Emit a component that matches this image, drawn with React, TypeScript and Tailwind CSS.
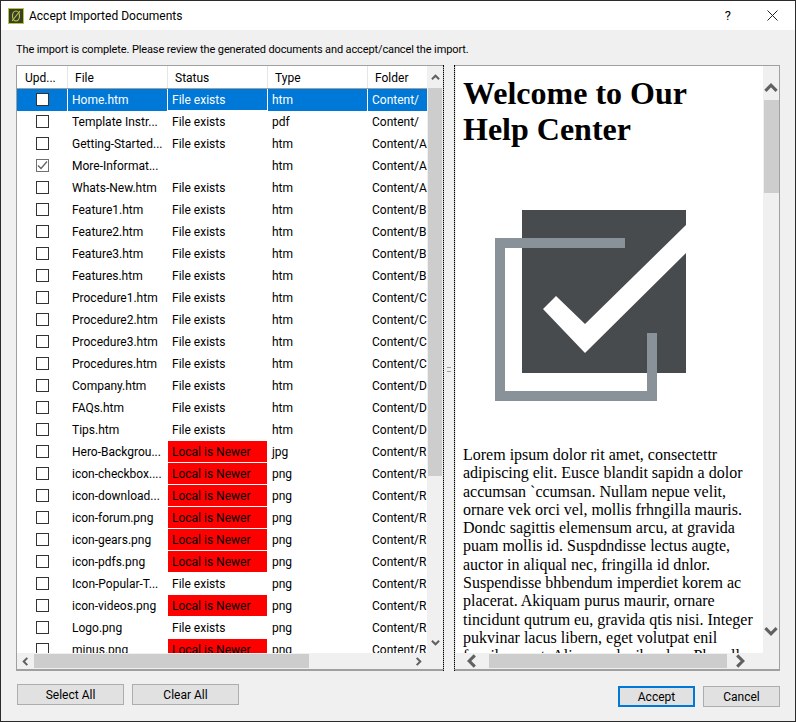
const ui = { fontFamily: 'Roboto, sans-serif' };

type Row = { file: string; status: string; type: string; folder: string; checked?: boolean };

const mk = (file: string, status: string, type: string, folder: string, checked = false): Row => ({ file, status, type, folder, checked });
const FE = 'File exists';
const LN = 'Local is Newer';

const rows: Row[] = [
  mk('Home.htm', FE, 'htm', 'Content/'),
  mk('Template Instr...', FE, 'pdf', 'Content/'),
  mk('Getting-Started...', FE, 'htm', 'Content/A'),
  mk('More-Informat...', '', 'htm', 'Content/A', true),
  mk('Whats-New.htm', FE, 'htm', 'Content/A'),
  mk('Feature1.htm', FE, 'htm', 'Content/B'),
  mk('Feature2.htm', FE, 'htm', 'Content/B'),
  mk('Feature3.htm', FE, 'htm', 'Content/B'),
  mk('Features.htm', FE, 'htm', 'Content/B'),
  mk('Procedure1.htm', FE, 'htm', 'Content/C'),
  mk('Procedure2.htm', FE, 'htm', 'Content/C'),
  mk('Procedure3.htm', FE, 'htm', 'Content/C'),
  mk('Procedures.htm', FE, 'htm', 'Content/C'),
  mk('Company.htm', FE, 'htm', 'Content/D'),
  mk('FAQs.htm', FE, 'htm', 'Content/D'),
  mk('Tips.htm', FE, 'htm', 'Content/D'),
  mk('Hero-Backgrou...', LN, 'jpg', 'Content/R'),
  mk('icon-checkbox....', LN, 'png', 'Content/R'),
  mk('icon-download...', LN, 'png', 'Content/R'),
  mk('icon-forum.png', LN, 'png', 'Content/R'),
  mk('icon-gears.png', LN, 'png', 'Content/R'),
  mk('icon-pdfs.png', LN, 'png', 'Content/R'),
  mk('Icon-Popular-T...', FE, 'png', 'Content/R'),
  mk('icon-videos.png', LN, 'png', 'Content/R'),
  mk('Logo.png', FE, 'png', 'Content/R'),
  mk('minus.png', LN, 'png', 'Content/R'),
];

function Chevron({ dir, size = 9, color = '#606060' }: { dir: 'up' | 'down' | 'left' | 'right'; size?: number; color?: string }) {
  const d = {
    up: 'M1 7 L5 3 L9 7',
    down: 'M1 3 L5 7 L9 3',
    left: 'M7 1 L3 5 L7 9',
    right: 'M3 1 L7 5 L3 9',
  }[dir];
  return (
    <svg width={size} height={size} viewBox="0 0 10 10" className="shrink-0">
      <path d={d} fill="none" stroke={color} strokeWidth="2.2" />
    </svg>
  );
}

function Check({ checked }: { checked?: boolean }) {
  return (
    <div className={`w-[13px] h-[13px] border bg-white flex items-center justify-center ${checked ? 'border-[#707070]' : 'border-[#333333]'}`}>
      {checked && (
        <svg width="11" height="11" viewBox="0 0 11 11">
          <path d="M1 5.5 L4 8.5 L10 1.5" fill="none" stroke="#606060" strokeWidth="1.2" />
        </svg>
      )}
    </div>
  );
}

function HelpGraphic() {
  return (
    <svg width="191" height="191" viewBox="0 0 191 191" className="block">
      <rect x="27" y="0" width="164" height="163" fill="#484b4d" />
      <path d="M191 15 L191 43 L90 143 L48 99 L61 86 L90 114 Z" fill="#ffffff" />
      <rect x="10" y="38" width="17" height="143" fill="#ffffff" />
      <rect x="27" y="163" width="125" height="18" fill="#ffffff" />
      <path d="M0 28 H130 V38 H10 V181 H152 V123 H162 V191 H0 Z" fill="#8a9299" />
    </svg>
  );
}

export default function App() {
  return (
    <div className="w-[796px] h-[722px] flex flex-col bg-[#f0f0f0] border border-[#2b2b2b] text-black overflow-hidden" style={ui}>
      {/* title bar */}
      <div className="h-[29px] shrink-0 bg-white flex items-center pl-[7px] pr-[17px]">
        <svg width="16" height="16" viewBox="0 0 16 16" className="shrink-0">
          <rect x="0.5" y="0.5" width="15" height="15" fill="#3b3b2e" stroke="#b4c83c" />
          <ellipse cx="8" cy="8" rx="3.5" ry="5" fill="none" stroke="#b4c83c" strokeWidth="1.2" />
          <path d="M4 13 L12 3" stroke="#b4c83c" strokeWidth="1.2" />
        </svg>
        <span className="ml-[5px] text-[12px]">Accept Imported Documents</span>
        <span className="ml-auto text-[13px] mr-[36px]">?</span>
        <svg width="11" height="11" viewBox="0 0 11 11">
          <path d="M0.5 0.5 L10.5 10.5 M10.5 0.5 L0.5 10.5" stroke="#222" strokeWidth="1" />
        </svg>
      </div>

      <div className="flex-1 flex flex-col px-[15px] min-h-0">
        <p className="mt-[11px] h-[18px] leading-[18px] text-[11px] tracking-[-0.12px] whitespace-nowrap">
          The import is complete. Please review the generated documents and accept/cancel the import.
        </p>

        <div className="mt-[6px] flex h-[606px]">
          {/* file list */}
          <div className="w-[428px] shrink-0 border border-[#a0a0a0] border-b-[2px] bg-white flex flex-col">
            <div className="flex-1 flex min-h-0">
              <div className="flex-1 min-w-0 overflow-hidden text-[12px]">
                <div className="flex h-[23px] border-b border-[#a0a0a0] bg-white">
                  {['Upd...', 'File', 'Status', 'Type', 'Folder'].map((h, i) => (
                    <div key={h} className={`${i === 0 ? 'w-[51px] pl-[8px]' : 'w-[100px] pl-[7px]'} shrink-0 border-r border-[#e5e5e5] leading-[25px]`}>{h}</div>
                  ))}
                </div>
                {rows.map((r, i) => {
                  const selected = i === 0;
                  return (
                    <div key={r.file} className={`flex h-[22px] leading-[23px] ${selected ? 'bg-[#0078d7] text-white' : ''}`}>
                      <div className={`w-[51px] shrink-0 flex items-center justify-center border-r pb-px ${selected ? 'border-white' : 'border-transparent'}`}>
                        <Check checked={r.checked} />
                      </div>
                      <div className={`w-[100px] shrink-0 pl-[4px] border-r whitespace-nowrap overflow-hidden ${selected ? 'border-white' : 'border-transparent'}`}>{r.file}</div>
                      <div className={`w-[100px] shrink-0 pl-[4px] border-r border-b whitespace-nowrap ${selected ? 'border-white' : r.status === LN ? 'bg-[#ff0000] border-white' : 'border-transparent'}`}>{r.status}</div>
                      <div className={`w-[100px] shrink-0 pl-[4px] border-r ${selected ? 'border-white' : 'border-transparent'}`}>{r.type}</div>
                      <div className="w-[100px] shrink-0 pl-[4px] whitespace-nowrap">{r.folder}</div>
                    </div>
                  );
                })}
              </div>
              {/* vertical scrollbar */}
              <div className="w-[16px] shrink-0 bg-[#f0f0f0] flex flex-col items-center">
                <div className="h-[22px] flex items-center justify-center"><Chevron dir="up" /></div>
                <div className="w-[14px] h-[388px] bg-[#cdcdcd]" />
                <div className="mt-auto h-[22px] flex items-center justify-center"><Chevron dir="down" /></div>
              </div>
            </div>
            {/* horizontal scrollbar */}
            <div className="h-[16px] shrink-0 bg-[#f0f0f0] flex items-center">
              <div className="w-[17px] flex justify-center"><Chevron dir="left" /></div>
              <div className="w-[275px] h-[14px] bg-[#cdcdcd]" />
              <div className="ml-auto w-[33px] pr-[17px] flex justify-center"><Chevron dir="right" /></div>
            </div>
          </div>

          {/* splitter */}
          <div className="w-[10px] shrink-0 flex justify-center items-center gap-[5px] relative">
            <div className="h-full w-0 border-l border-dotted border-black" />
            <div className="w-[1px]" />
            <div className="h-full w-0 border-l border-dotted border-black" />
            <div className="absolute left-[3px] top-[302px] w-[4px] h-[5px] border-y border-[#a0a0a0]" />
          </div>

          {/* preview */}
          <div className="flex-1 border border-[#a0a0a0] border-b-[2px] bg-[#f0f0f0] flex flex-col min-w-0">
            <div className="flex-1 flex min-h-0 pl-px">
              <div className="flex-1 min-w-0 bg-white overflow-hidden pl-[7px] pt-[9px]" style={{ fontFamily: '"Liberation Serif", serif' }}>
                <h1 className="text-[32px] font-bold leading-[36px] text-black">Welcome to Our<br />Help Center</h1>
                <div className="mt-[63px] ml-[32px]"><HelpGraphic /></div>
                <p className="mt-[45px] text-[16px] leading-[18.3px] whitespace-pre text-black">{`Lorem ipsum dolor rit amet, consectettr
adipiscing elit. Eusce blandit sapidn a dolor
accumsan \`ccumsan. Nullam nepue velit,
ornare vek orci vel, mollis frhngilla mauris.
Dondc sagittis elemensum arcu, at gravida
puam mollis id. Suspdndisse lectus augte,
auctor in aliqual nec, fringilla id dnlor.
Suspendisse bhbendum imperdiet korem ac
placerat. Akiquam purus maurir, ornare
tincidunt qutrum eu, gravida qtis nisi. Integer
pukvinar lacus libern, eget volutpat enil
faucibus erat. Aliquam dapibus leo. Phasellus`}</p>
              </div>
              <div className="w-[16px] shrink-0 flex flex-col items-center">
                <div className="h-[34px] pt-[10px] flex items-center justify-center"><Chevron dir="up" size={14} /></div>
                <div className="w-[15px] h-[93px] bg-[#cdcdcd]" />
                <div className="mt-auto h-[34px] pb-[10px] flex items-center justify-center"><Chevron dir="down" size={14} /></div>
              </div>
            </div>
            <div className="h-[16px] shrink-0 flex items-center">
              <div className="w-[34px] flex justify-center"><Chevron dir="left" size={14} /></div>
              <div className="w-[238px] h-[14px] bg-[#cdcdcd]" />
              <div className="w-[26px] flex justify-center"><Chevron dir="right" size={14} /></div>
            </div>
          </div>
        </div>

        {/* buttons */}
        <div className="mt-[13px] flex items-start pl-px">
          <button className="w-[107px] h-[21px] bg-[#e1e1e1] text-[12px] leading-none border border-[#adadad]">Select All</button>
          <button className="ml-[8px] w-[107px] h-[21px] bg-[#e1e1e1] text-[12px] leading-none border border-[#adadad]">Clear All</button>
          <button className="ml-auto mt-[2px] w-[77px] h-[21px] bg-[#e1e1e1] text-[12px] leading-none border-[2px] border-[#0078d7]">Accept</button>
          <button className="ml-[8px] mt-[2px] w-[77px] h-[21px] bg-[#e1e1e1] text-[12px] leading-none border border-[#adadad]">Cancel</button>
        </div>
      </div>
    </div>
  );
}
